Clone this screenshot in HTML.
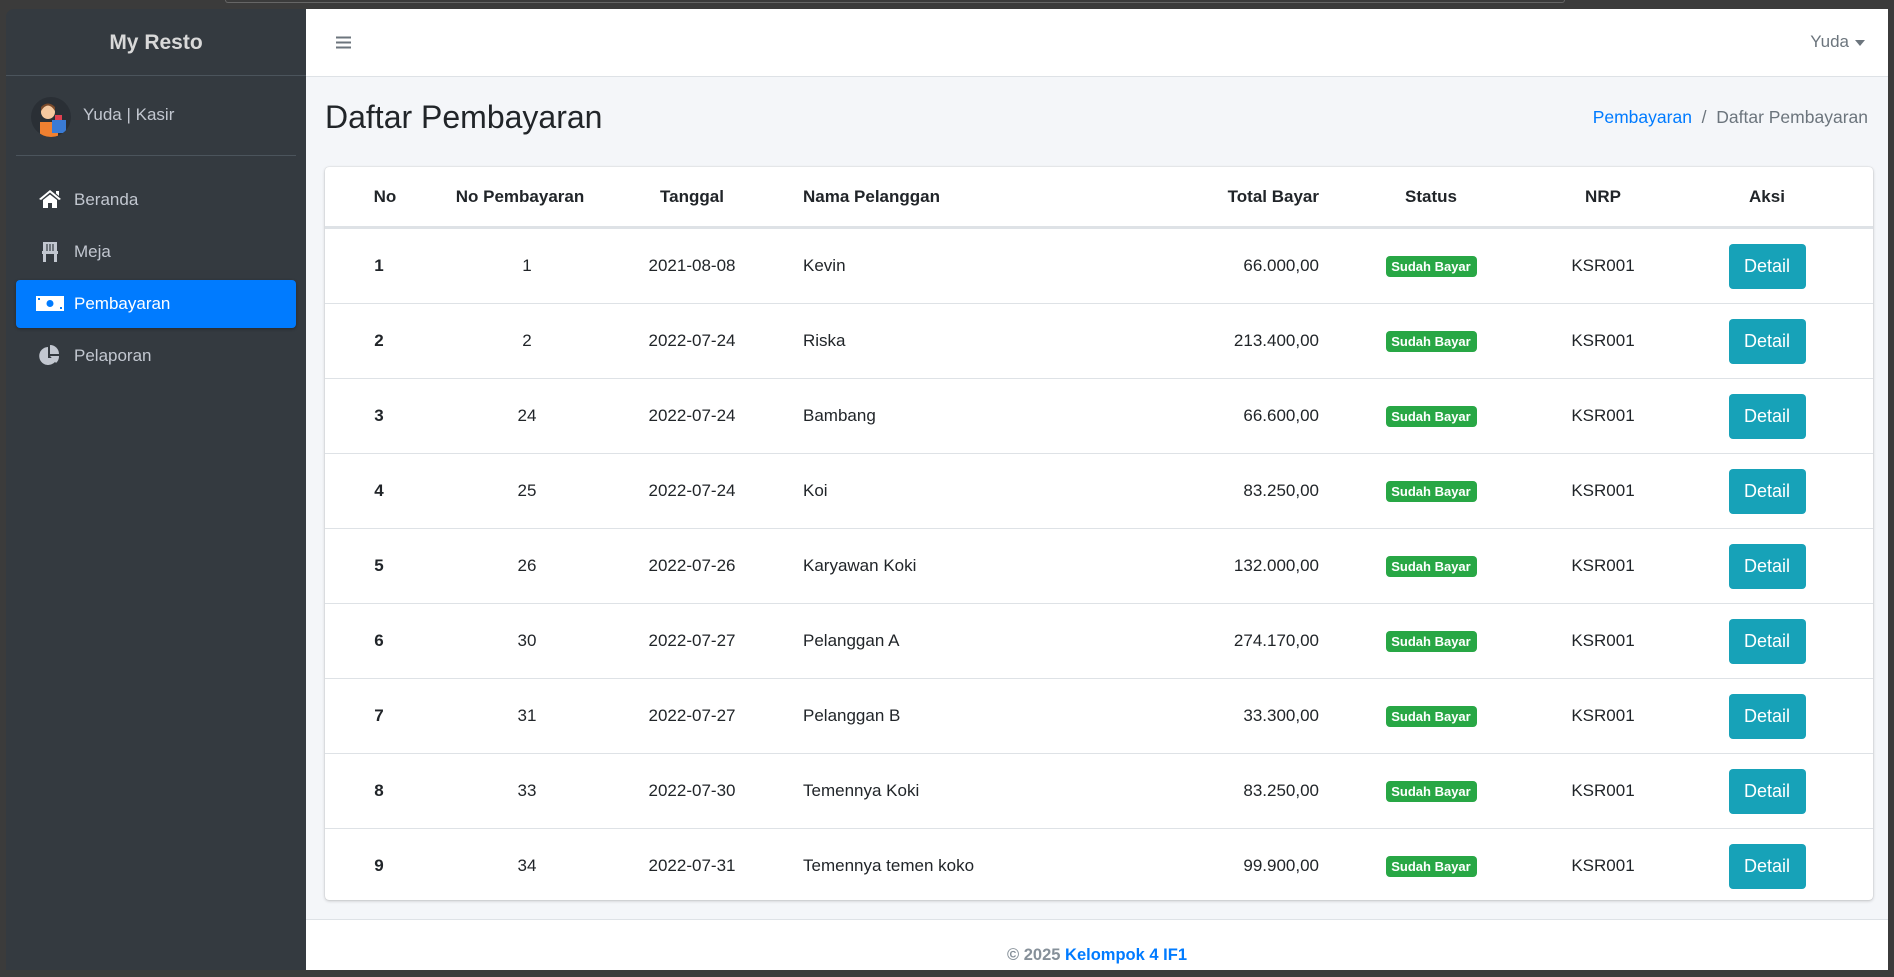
<!DOCTYPE html>
<html><head><meta charset="utf-8"><style>
*{box-sizing:border-box;margin:0;padding:0}
body{width:1894px;height:977px;background:#3b3b3b;font-family:"Liberation Sans",sans-serif;position:relative;overflow:hidden;color:#212529}
.topline{position:absolute;left:225px;top:0;width:1340px;height:3px;border:1px solid #666;border-top:none;border-radius:0 0 8px 8px}
#sb{position:absolute;left:6px;top:9px;width:300px;height:961px;background:#343a40;border-radius:8px 0 0 0}
#sb .brand{height:67px;border-bottom:1px solid #4b545c;text-align:center;line-height:67px;font-size:21px;font-weight:bold;color:#d9d9d9}
#sb .user{position:absolute;top:86px;left:10px;width:280px;height:61px;border-bottom:1px solid #4b545c}
#sb .user .av{position:absolute;left:15px;top:2px;width:40px;height:40px;border-radius:50%;background:#2a2f35;overflow:hidden}
#sb .user span{position:absolute;left:67px;top:10px;font-size:17px;color:#c2c7d0}
.nav{position:absolute;left:10px;width:280px;height:48px;border-radius:4px;color:#c2c7d0;font-size:17px}
.nav span{position:absolute;left:58px;top:14px}
.nav svg{position:absolute;left:22px;top:13px}
.nav.act{background:#007bff;color:#fff;box-shadow:0 1px 3px rgba(0,0,0,.3)}
#main{position:absolute;left:306px;top:9px;width:1582px;height:961px;background:#f4f6f9}
#top{height:68px;background:#fff;border-bottom:1px solid #dee2e6;position:relative}
h1{position:absolute;left:19px;top:90px;font-size:32px;font-weight:normal;color:#212529}
.bc{position:absolute;right:20px;top:98px;font-size:17.5px;color:#6c757d}
.bc a{color:#007bff}
#card{position:absolute;left:19px;top:158px;width:1548px;height:733px;background:#fff;border-radius:4px;box-shadow:0 0 1px rgba(0,0,0,.2),0 1px 3px rgba(0,0,0,.2)}
.hr{position:absolute;left:0;top:0;width:100%;height:61px;border-bottom:2px solid #dee2e6;font-weight:bold;font-size:17px}
.r{position:absolute;left:0;width:100%;height:75px;border-top:1px solid #dee2e6;font-size:17px}
.c{position:absolute;top:0;height:100%;display:flex;align-items:center;white-space:nowrap}
.hr .c{height:59px}
.n{left:28px;width:64px;justify-content:center;font-weight:bold}
.r .n{left:22px}
.p{left:135px;width:120px;justify-content:center}
.r .p{left:142px}
.t{left:307px;width:120px;justify-content:center}
.m{left:478px}
.tb{left:794px;width:200px;justify-content:flex-end}
.s{left:1046px;width:120px;justify-content:center}
.nr{left:1218px;width:120px;justify-content:center}
.a{left:1382px;width:120px;justify-content:center}
.badge{background:#28a745;color:#fff;font-size:13px;font-weight:bold;width:91px;text-align:center;height:21px;line-height:21px;border-radius:4px}
.btn{background:#17a2b8;color:#fff;font-size:18px;width:77px;height:45px;line-height:45px;text-align:center;border-radius:4px}
#foot{position:absolute;left:0;top:910px;width:100%;height:51px;background:#fff;border-top:1px solid #dee2e6;text-align:center;font-size:16.5px;font-weight:bold;color:#869099;padding-top:26px}
#foot a{color:#007bff}
</style></head><body>
<div class="topline"></div>
<div id="sb">
<div class="brand">My Resto</div>
<div class="user"><div class="av"><svg width="40" height="40" viewBox="0 0 40 40"><rect x="9" y="25" width="18" height="15" fill="#f08030"/><rect x="21" y="23" width="14" height="13" fill="#3a7bd5"/><rect x="24" y="18" width="7" height="5" fill="#e04050"/><circle cx="17" cy="15" r="7" fill="#f5c9a0"/><path d="M10 14 Q17 3 24 14 L24 10 Q17 3 10 10Z" fill="#7a4a2a"/></svg></div><span>Yuda | Kasir</span></div>
<div class="nav" style="top:167px"><svg width="24" height="20" viewBox="0 0 24 20"><path d="M12 1 L1 10 L3 11 L12 3.5 L21 11 L23 10Z M18 2h3v5l-3-2.5z M5 11 L12 5.5 L19 11 V19 H14 V14 H10 V19 H5Z" fill="#fff"/></svg><span>Beranda</span></div>
<div class="nav" style="top:219px"><svg width="24" height="22" viewBox="0 0 24 22"><path d="M5 1h14v9H5z M4 10h16v3H4z M5 13h3v8H5z M16 13h3v8h-3z" fill="#c2c7d0"/><path d="M9 3v7M12 3v7M15 3v7" stroke="#343a40" stroke-width="1.2"/></svg><span>Meja</span></div>
<div class="nav act" style="top:271px"><svg width="28" height="18" viewBox="0 0 28 18" style="left:20px;top:15px"><rect x="0" y="1" width="28" height="15" fill="#fff"/><circle cx="14" cy="8.5" r="3.5" fill="#007bff"/><rect x="2" y="3" width="2" height="2" fill="#007bff"/><rect x="24" y="12" width="2" height="2" fill="#007bff"/></svg><span>Pembayaran</span></div>
<div class="nav" style="top:323px"><svg width="22" height="22" viewBox="0 0 22 22"><path d="M10 2 A9 9 0 1 0 19 13 H10Z" fill="#c2c7d0"/><path d="M12 0 A9 9 0 0 1 21 9 H12Z" fill="#c2c7d0"/><path d="M12 11 H21 A9 9 0 0 1 18 18Z" fill="#c2c7d0"/></svg><span>Pelaporan</span></div>
</div>
<div id="main">
<div id="top"><svg style="position:absolute;left:30px;top:27px" width="15" height="13" viewBox="0 0 15 13"><path d="M0 1.5h15M0 6.5h15M0 11.5h15" stroke="#6c757d" stroke-width="2"/></svg>
<span style="position:absolute;right:39px;top:23px;font-size:17px;color:#6c757d">Yuda</span><svg style="position:absolute;right:23px;top:31px" width="10" height="6"><path d="M0 0h10L5 6z" fill="#6c757d"/></svg></div>
<h1>Daftar Pembayaran</h1>
<div class="bc"><a>Pembayaran</a> &nbsp;/&nbsp; Daftar Pembayaran</div>
<div id="card">
<div class="hr"><div class="c n">No</div><div class="c p">No Pembayaran</div><div class="c t">Tanggal</div><div class="c m">Nama Pelanggan</div><div class="c tb">Total Bayar</div><div class="c s">Status</div><div class="c nr">NRP</div><div class="c a">Aksi</div></div>
<div class="r" style="top:61px"><div class="c n">1</div><div class="c p">1</div><div class="c t">2021-08-08</div><div class="c m">Kevin</div><div class="c tb">66.000,00</div><div class="c s"><span class="badge">Sudah Bayar</span></div><div class="c nr">KSR001</div><div class="c a"><span class="btn">Detail</span></div></div>
<div class="r" style="top:136px"><div class="c n">2</div><div class="c p">2</div><div class="c t">2022-07-24</div><div class="c m">Riska</div><div class="c tb">213.400,00</div><div class="c s"><span class="badge">Sudah Bayar</span></div><div class="c nr">KSR001</div><div class="c a"><span class="btn">Detail</span></div></div>
<div class="r" style="top:211px"><div class="c n">3</div><div class="c p">24</div><div class="c t">2022-07-24</div><div class="c m">Bambang</div><div class="c tb">66.600,00</div><div class="c s"><span class="badge">Sudah Bayar</span></div><div class="c nr">KSR001</div><div class="c a"><span class="btn">Detail</span></div></div>
<div class="r" style="top:286px"><div class="c n">4</div><div class="c p">25</div><div class="c t">2022-07-24</div><div class="c m">Koi</div><div class="c tb">83.250,00</div><div class="c s"><span class="badge">Sudah Bayar</span></div><div class="c nr">KSR001</div><div class="c a"><span class="btn">Detail</span></div></div>
<div class="r" style="top:361px"><div class="c n">5</div><div class="c p">26</div><div class="c t">2022-07-26</div><div class="c m">Karyawan Koki</div><div class="c tb">132.000,00</div><div class="c s"><span class="badge">Sudah Bayar</span></div><div class="c nr">KSR001</div><div class="c a"><span class="btn">Detail</span></div></div>
<div class="r" style="top:436px"><div class="c n">6</div><div class="c p">30</div><div class="c t">2022-07-27</div><div class="c m">Pelanggan A</div><div class="c tb">274.170,00</div><div class="c s"><span class="badge">Sudah Bayar</span></div><div class="c nr">KSR001</div><div class="c a"><span class="btn">Detail</span></div></div>
<div class="r" style="top:511px"><div class="c n">7</div><div class="c p">31</div><div class="c t">2022-07-27</div><div class="c m">Pelanggan B</div><div class="c tb">33.300,00</div><div class="c s"><span class="badge">Sudah Bayar</span></div><div class="c nr">KSR001</div><div class="c a"><span class="btn">Detail</span></div></div>
<div class="r" style="top:586px"><div class="c n">8</div><div class="c p">33</div><div class="c t">2022-07-30</div><div class="c m">Temennya Koki</div><div class="c tb">83.250,00</div><div class="c s"><span class="badge">Sudah Bayar</span></div><div class="c nr">KSR001</div><div class="c a"><span class="btn">Detail</span></div></div>
<div class="r" style="top:661px"><div class="c n">9</div><div class="c p">34</div><div class="c t">2022-07-31</div><div class="c m">Temennya temen koko</div><div class="c tb">99.900,00</div><div class="c s"><span class="badge">Sudah Bayar</span></div><div class="c nr">KSR001</div><div class="c a"><span class="btn">Detail</span></div></div>
</div>
<div id="foot">© 2025 <a>Kelompok 4 IF1</a></div>
</div>
</body></html>
